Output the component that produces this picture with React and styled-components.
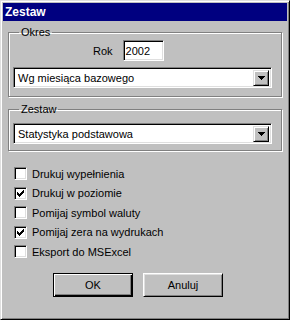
import React from 'react'
import styled, { createGlobalStyle } from 'styled-components'

const Global = createGlobalStyle`
  body {
    margin: 0;
    background: #c0c0c0;
    font-family: "Liberation Sans", Arial, sans-serif;
    font-size: 11px;
    color: #000;
  }
`;

const Window = styled.div`
  box-sizing: border-box;
  width: 290px;
  height: 320px;
  background: #c0c0c0;
  border: 1px solid;
  border-color: #dfdfdf #000 #000 #dfdfdf;
  box-shadow: inset 1px 1px 0 #fff, inset -1px -1px 0 #808080;
  padding: 2px;
  display: flex;
  flex-direction: column;
`;

const TitleBar = styled.div`
  height: 18px;
  background: #000080;
  color: #fff;
  font-weight: bold;
  font-size: 12px;
  display: flex;
  align-items: center;
  padding-left: 2px;
`;

const Body = styled.div`
  display: flex;
  flex-direction: column;
  padding: 0 5px 0 5px;
`;

const Group = styled.fieldset`
  box-sizing: border-box;
  width: 274px;
  margin: ${p => p.$top}px 0 0 0;
  padding: ${p => p.$pad};
  border: 1px solid #808080;
  box-shadow: 1px 1px 0 #fff, inset 1px 1px 0 #fff;
  min-inline-size: 0;
  display: flex;
  flex-direction: column;
`;

const Legend = styled.legend`
  margin-left: 6px;
  padding: 0 2px;
  line-height: 14px;
  font-size: 11px;
`;

const YearRow = styled.div`
  display: flex;
  align-items: center;
  gap: 10px;
  padding-left: 80px;
  margin-bottom: 6px;
`;

const Sunken = styled.div`
  box-sizing: border-box;
  background: #fff;
  border: 1px solid;
  border-color: #808080 #fff #fff #808080;
  box-shadow: inset 1px 1px 0 #000, inset -1px -1px 0 #dfdfdf;
  height: 21px;
  display: flex;
  align-items: center;
  padding: 0 2px;
`;

const YearInput = styled(Sunken)`
  width: 41px;
`;

const Combo = styled(Sunken)`
  width: 259px;
  justify-content: space-between;
  padding: 2px 2px 2px 4px;
`;

const DropButton = styled.div`
  box-sizing: border-box;
  width: 16px;
  height: 16px;
  background: #c0c0c0;
  border: 1px solid;
  border-color: #dfdfdf #000 #000 #dfdfdf;
  box-shadow: inset 1px 1px 0 #fff, inset -1px -1px 0 #808080;
  display: flex;
  align-items: center;
  justify-content: center;
`;

const Options = styled.div`
  display: flex;
  flex-direction: column;
  margin-top: 13px;
  padding-left: 11px;
`;

const Option = styled.label`
  display: flex;
  align-items: center;
  gap: 5px;
  height: 19.5px;
`;

const Box = styled.span`
  box-sizing: border-box;
  width: 13px;
  height: 13px;
  background: #fff;
  border: 1px solid;
  border-color: #808080 #fff #fff #808080;
  box-shadow: inset 1px 1px 0 #000, inset -1px -1px 0 #dfdfdf;
  display: block;
  position: relative;
`;

const Buttons = styled.div`
  display: flex;
  gap: 10px;
  padding-left: 50px;
  margin-top: 11px;
`;

const Button = styled.div`
  box-sizing: border-box;
  width: 80px;
  height: 24px;
  display: flex;
  align-items: center;
  justify-content: center;
  background: #c0c0c0;
  border: 1px solid;
  border-color: ${p => (p.$default ? '#000' : '#fff #000 #000 #fff')};
  box-shadow: ${p =>
    p.$default
      ? 'inset 1px 1px 0 #fff, inset -1px -1px 0 #000, inset -2px -2px 0 #808080'
      : 'inset 1px 1px 0 #dfdfdf, inset -1px -1px 0 #808080'};
`;

const Arrow = () => (
  <svg width="7" height="4" viewBox="0 0 7 4" shapeRendering="crispEdges">
    <rect x="0" y="0" width="7" height="1" />
    <rect x="1" y="1" width="5" height="1" />
    <rect x="2" y="2" width="3" height="1" />
    <rect x="3" y="3" width="1" height="1" />
  </svg>
);

const Check = () => (
  <svg
    width="7"
    height="7"
    viewBox="0 0 7 7"
    shapeRendering="crispEdges"
    style={{ position: 'absolute', left: 2, top: 2 }}
  >
    {[2, 3, 4, 3, 2, 1, 0].map((y, i) => (
      <rect key={i} x={i} y={y} width="1" height="3" />
    ))}
  </svg>
);

const options = [
  ['Drukuj wypełnienia', false],
  ['Drukuj w poziomie', true],
  ['Pomijaj symbol waluty', false],
  ['Pomijaj zera na wydrukach', true],
  ['Eksport do MSExcel', false],
];

const App = () => {
  return (
    <>
      <Global />
      <Window>
        <TitleBar>Zestaw</TitleBar>
        <Body>
          <Group $top={4} $pad="1px 0 8px 4px">
            <Legend>Okres</Legend>
            <YearRow>
              <span>Rok</span>
              <YearInput>2002</YearInput>
            </YearRow>
            <Combo>
              <span>Wg miesiąca bazowego</span>
              <DropButton>
                <Arrow />
              </DropButton>
            </Combo>
          </Group>
          <Group $top={5} $pad="7px 0 6px 4px">
            <Legend>Zestaw</Legend>
            <Combo>
              <span>Statystyka podstawowa</span>
              <DropButton>
                <Arrow />
              </DropButton>
            </Combo>
          </Group>
        </Body>
        <Options>
          {options.map(([text, checked]) => (
            <Option key={text}>
              <Box>{checked && <Check />}</Box>
              <span>{text}</span>
            </Option>
          ))}
        </Options>
        <Buttons>
          <Button $default>OK</Button>
          <Button>Anuluj</Button>
        </Buttons>
      </Window>
    </>
  )
}

export default App;
